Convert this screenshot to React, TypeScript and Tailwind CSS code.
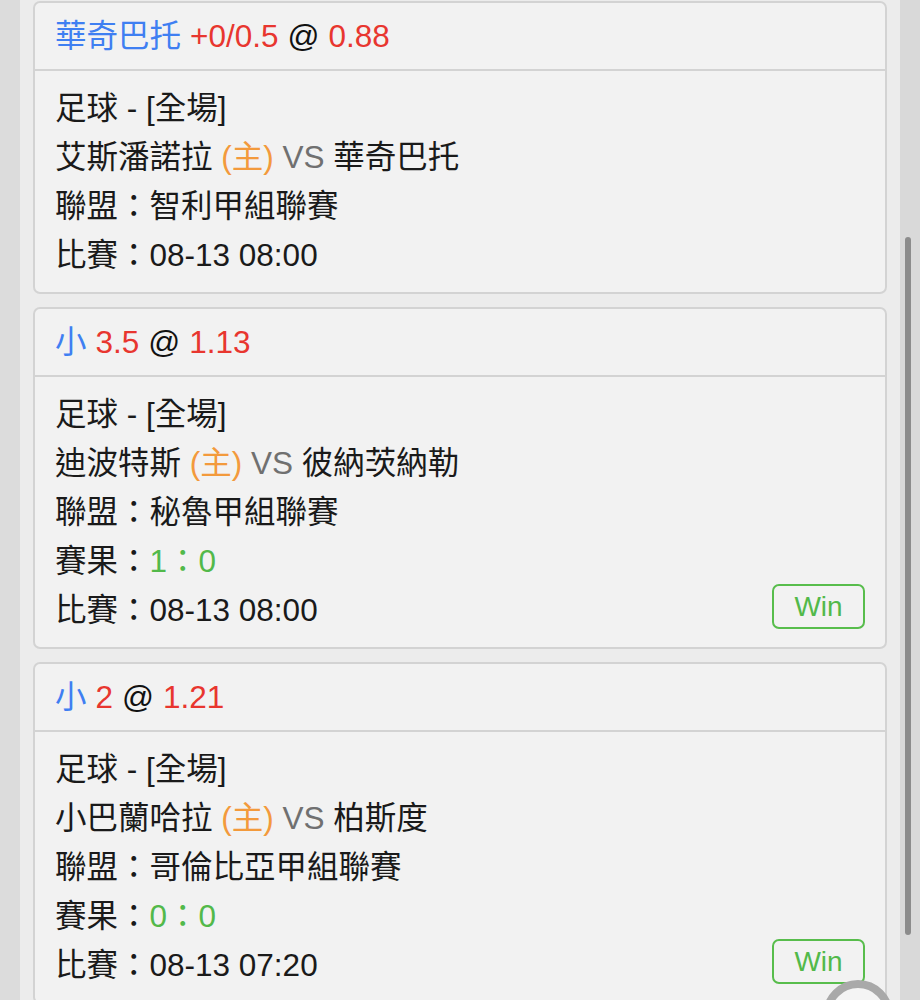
import React from "react";

type Bet = {
  pick: string;
  line: string;
  odds: string;
  home: string;
  away: string;
  league: string;
  score?: string;
  time: string;
  result?: string;
};

const bets: Bet[] = [
  {
    pick: "華奇巴托",
    line: "+0/0.5",
    odds: "0.88",
    home: "艾斯潘諾拉",
    away: "華奇巴托",
    league: "智利甲組聯賽",
    time: "08-13 08:00",
  },
  {
    pick: "小",
    line: "3.5",
    odds: "1.13",
    home: "迪波特斯",
    away: "彼納茨納勒",
    league: "秘魯甲組聯賽",
    score: "1：0",
    time: "08-13 08:00",
    result: "Win",
  },
  {
    pick: "小",
    line: "2",
    odds: "1.21",
    home: "小巴蘭哈拉",
    away: "柏斯度",
    league: "哥倫比亞甲組聯賽",
    score: "0：0",
    time: "08-13 07:20",
    result: "Win",
  },
];

function BetCard({ bet }: { bet: Bet }) {
  return (
    <div className="rounded-[7px] border-2 border-[#d3d3d3] bg-[#f2f2f2]">
      {/* Header */}
      <div className="flex h-[68px] items-center border-b-2 border-[#d3d3d3] px-[20px] pt-[2px]">
        <span className="text-[#3f7ff2]">{bet.pick}</span>
        <span className="ml-[9px] text-[#e8362f]">{bet.line}</span>
        <span className="ml-[9px] text-[#111]">@</span>
        <span className="ml-[9px] text-[#e8362f]">{bet.odds}</span>
      </div>

      {/* Body */}
      <div className="px-[20px] pt-[13px] pb-[12px] leading-[49px] text-[#1a1a1a]">
        <div>足球 - [全場]</div>
        <div>
          {bet.home} <span className="text-[#f39a3c]">(主)</span>{" "}
          <span className="text-[#707070]">VS</span> {bet.away}
        </div>
        <div>聯盟：{bet.league}</div>
        {bet.score && (
          <div>
            賽果：<span className="text-[#52b94a]">{bet.score}</span>
          </div>
        )}
        <div className="flex items-center justify-between">
          <span>比賽：{bet.time}</span>
          {bet.result && (
            <span className="flex h-[45px] w-[93px] -translate-y-[4px] items-center justify-center rounded-[7px] border-2 border-[#58bd4c] text-[28px] leading-none text-[#52b94a]">
              {bet.result}
            </span>
          )}
        </div>
      </div>
    </div>
  );
}

export default function App() {
  return (
    <div
      className="relative flex h-[1000px] w-[920px] overflow-hidden bg-[#dcdcdc] text-[31.5px]"
      style={{ fontFamily: '"Liberation Sans", "Noto Sans CJK TC", sans-serif' }}
    >
      {/* Content panel */}
      <div className="ml-[20px] flex w-[880px] flex-col gap-[13px] bg-[#ececec] px-[13px] pt-[1px]">
        {bets.map((b, i) => (
          <BetCard key={i} bet={b} />
        ))}
      </div>

      {/* Scrollbar */}
      <div className="relative w-[20px] bg-[#d9d9d9]">
        <div className="absolute left-[5px] top-[237px] h-[698px] w-[6px] rounded-full bg-[#8c8c8c]" />
      </div>

      {/* Floating button peeking from bottom */}
      <div className="absolute left-[823px] top-[980px] h-[70px] w-[70px] rounded-full border-[8px] border-[#a9a9a9] bg-[#f4f4f4]" />
    </div>
  );
}
